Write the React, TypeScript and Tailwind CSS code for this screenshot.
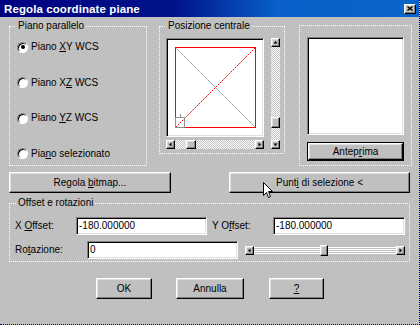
import React from "react";

const raised =
  "border border-t-white border-l-white border-r-black border-b-black shadow-[inset_-1px_-1px_0_#808080,inset_1px_1px_0_#dfdfdf]";
const sunken =
  "border border-t-[#808080] border-l-[#808080] border-r-white border-b-white shadow-[inset_1px_1px_0_#000,inset_-1px_-1px_0_#dfdfdf]";
const group = "border border-dotted border-white";
const dither =
  "bg-[image:conic-gradient(#fff_25%,#c0c0c0_0_50%,#fff_0_75%,#c0c0c0_0)] bg-[length:2px_2px]";

type Dir = "up" | "down" | "left" | "right";

const tri: Record<Dir, string> = {
  up: "1.5,4.5 3.5,2 5.5,4.5",
  down: "1.5,2.5 3.5,5 5.5,2.5",
  left: "4.5,1.5 2,3.5 4.5,5.5",
  right: "2.5,1.5 5,3.5 2.5,5.5",
};

const ArrowBtn = ({ dir }: { dir: Dir }) => (
  <div className={`${raised} w-[9px] h-[9px] bg-[#c0c0c0] shrink-0`}>
    <svg width="7" height="7" className="block">
      <polygon points={tri[dir]} fill="#000" />
    </svg>
  </div>
);

const Radio = ({ checked }: { checked?: boolean }) => (
  <span className="w-[11px] h-[11px] rounded-full bg-white border border-t-[#808080] border-l-[#808080] border-r-white border-b-white shadow-[inset_1px_1px_0_#000] flex items-center justify-center shrink-0">
    {checked && <span className="w-[4px] h-[4px] rounded-full bg-black" />}
  </span>
);

const Button = ({
  children,
  className = "",
}: {
  children: React.ReactNode;
  className?: string;
}) => (
  <div
    className={`${raised} bg-[#c0c0c0] flex items-center justify-center text-black ${className}`}
  >
    {children}
  </div>
);

const U = ({ children }: { children: React.ReactNode }) => (
  <span className="underline underline-offset-1">{children}</span>
);

export default function App() {
  return (
    <div className="relative w-[420px] h-[325px] bg-[#c0c0c0] overflow-hidden flex flex-col text-[10px] leading-[12px] text-black font-['Liberation_Sans',Arial,sans-serif] border-r border-b border-dotted border-[#000080]">
      {/* title bar */}
      <div className="h-[17px] shrink-0 flex items-center justify-between pl-[4px] pr-[3px] bg-[linear-gradient(90deg,#000080_0%,#00148a_42%,#0860c8_66%,#0a64c8_100%)]">
        <span className="text-white font-bold text-[11.5px] tracking-[0.1px]">
          Regola coordinate piane
        </span>
        <div className={`${raised} w-[12px] h-[10px] bg-[#c0c0c0] flex items-center justify-center`}>
          <svg width="6" height="5" className="block">
            <path d="M0.5 0.5L5.5 4.5M5.5 0.5L0.5 4.5" stroke="#000" strokeWidth="1.4" />
          </svg>
        </div>
      </div>

      <div className="flex flex-col pl-[9px]">
        {/* top row */}
        <div className="flex items-start mt-[3px]">
          <fieldset className={`${group} w-[138px] h-[146px]`}>
            <legend className="ml-[6px] px-[2px]">Piano parallelo</legend>
            <div className="flex flex-col pl-[7px] pt-[9px] gap-[23.5px]">
              <label className="flex items-center gap-[3px] h-[12px]">
                <Radio checked />
                <span>
                  Piano <U>X</U>Y WCS
                </span>
              </label>
              <label className="flex items-center gap-[3px] h-[12px]">
                <Radio />
                <span>
                  Piano X<U>Z</U> WCS
                </span>
              </label>
              <label className="flex items-center gap-[3px] h-[12px]">
                <Radio />
                <span>
                  Piano <U>Y</U>Z WCS
                </span>
              </label>
              <label className="flex items-center gap-[3px] h-[12px]">
                <Radio />
                <span>
                  Pia<U>n</U>o selezionato
                </span>
              </label>
            </div>
          </fieldset>

          <fieldset className={`${group} w-[126px] h-[134px] ml-[12px]`}>
            <legend className="ml-[6px] px-[2px]">Posizione centrale</legend>
            <div className="flex pl-[6px] pt-[6px]">
              <div className="flex flex-col">
                <div className={`${sunken} w-[98px] h-[99px] bg-white`}>
                  <svg width="96" height="97" className="block">
                    <line x1="8.5" y1="8.5" x2="88.5" y2="88.5" stroke="#707070" strokeDasharray="1 1" />
                    <line x1="8.5" y1="88.5" x2="88.5" y2="8.5" stroke="#ff0000" strokeDasharray="2 1" />
                    <rect x="8.5" y="8.5" width="80" height="80" fill="none" stroke="#ff0000" />
                    <rect x="8.5" y="78.5" width="9" height="10" fill="none" stroke="#909090" />
                    <line x1="13.5" y1="75" x2="13.5" y2="78" stroke="#909090" />
                  </svg>
                </div>
                <div className="flex w-[98px] h-[9px] mt-[3px]">
                  <ArrowBtn dir="left" />
                  <div className={`${dither} w-[11px]`} />
                  <div className={`${raised} w-[10px] h-[9px] bg-[#c0c0c0]`} />
                  <div className={`${dither} flex-1`} />
                  <ArrowBtn dir="right" />
                </div>
              </div>
              <div className="flex flex-col w-[9px] h-[111px] ml-[7px]">
                <ArrowBtn dir="up" />
                <div className={`${dither} h-[70px]`} />
                <div className={`${raised} w-[9px] h-[11px] bg-[#c0c0c0]`} />
                <div className={`${dither} flex-1`} />
                <ArrowBtn dir="down" />
              </div>
            </div>
          </fieldset>

          <fieldset className={`${group} w-[113px] h-[141px] ml-[14px] mt-[5px]`}>
            <div className="flex flex-col pl-[7px] pt-[11px]">
              <div className={`${sunken} w-[97px] h-[98px] bg-white`} />
              <div className="mt-[7px] w-[97px] h-[19px] border border-black">
                <Button className="w-full h-full">
                  <span>
                    Antep<U>r</U>ima
                  </span>
                </Button>
              </div>
            </div>
          </fieldset>
        </div>

        {/* action buttons */}
        <div className="flex mt-[6px]">
          <Button className="w-[162px] h-[21px]">
            <span>
              Regola <U>b</U>itmap...
            </span>
          </Button>
          <Button className="w-[181px] h-[21px] ml-[58px]">
            <span>
              Punt<U>i</U> di selezione &lt;
            </span>
          </Button>
        </div>

        {/* offset group */}
        <fieldset className={`${group} w-[401px] h-[65px] mt-[4px]`}>
          <legend className="ml-[6px] px-[2px]">Offset e rotazioni</legend>
          <div className="flex flex-col pl-[5px] pt-[8px]">
            <div className="flex items-center h-[18px]">
              <span className="w-[61px]">
                X <U>O</U>ffset:
              </span>
              <div className={`${sunken} w-[131px] h-[18px] bg-white flex items-center pl-[2px]`}>
                -180.000000
              </div>
              <span className="w-[61px] ml-[5px]">
                Y O<U>f</U>fset:
              </span>
              <div className={`${sunken} w-[132px] h-[18px] bg-white flex items-center pl-[2px]`}>
                -180.000000
              </div>
            </div>
            <div className="flex items-center h-[18px] mt-[6px]">
              <span className="w-[72px]">
                Ro<U>t</U>azione:
              </span>
              <div className={`${sunken} w-[151px] h-[18px] bg-white flex items-center pl-[2px]`}>
                0
              </div>
              <div className="flex items-center w-[160px] h-[11px] ml-[7px]">
                <ArrowBtn dir="left" />
                <div className="w-[66px] h-[7px] bg-[image:repeating-linear-gradient(to_bottom,#fff_0_1px,#c0c0c0_1px_2px)]" />
                <div className={`${raised} w-[8px] h-[11px] bg-[#c0c0c0]`} />
                <div className="flex-1 h-[7px] bg-[image:repeating-linear-gradient(to_bottom,#fff_0_1px,#c0c0c0_1px_2px)]" />
                <ArrowBtn dir="right" />
              </div>
            </div>
          </div>
        </fieldset>

        {/* dialog buttons */}
        <div className="flex mt-[16px]">
          <Button className="w-[56px] h-[21px] ml-[87px]">OK</Button>
          <Button className="w-[68px] h-[21px] ml-[24px]">Annulla</Button>
          <Button className="w-[55px] h-[21px] ml-[25px]">
            <U>?</U>
          </Button>
        </div>
      </div>

      {/* mouse cursor */}
      <svg width="11" height="17" className="absolute left-[263px] top-[182px]">
        <path
          d="M0.5 0.5L0.5 13.5L3.5 10.5L5.5 15.5L7.5 14.5L5.5 9.5L9.5 9.5Z"
          fill="#fff"
          stroke="#000"
        />
      </svg>
    </div>
  );
}
